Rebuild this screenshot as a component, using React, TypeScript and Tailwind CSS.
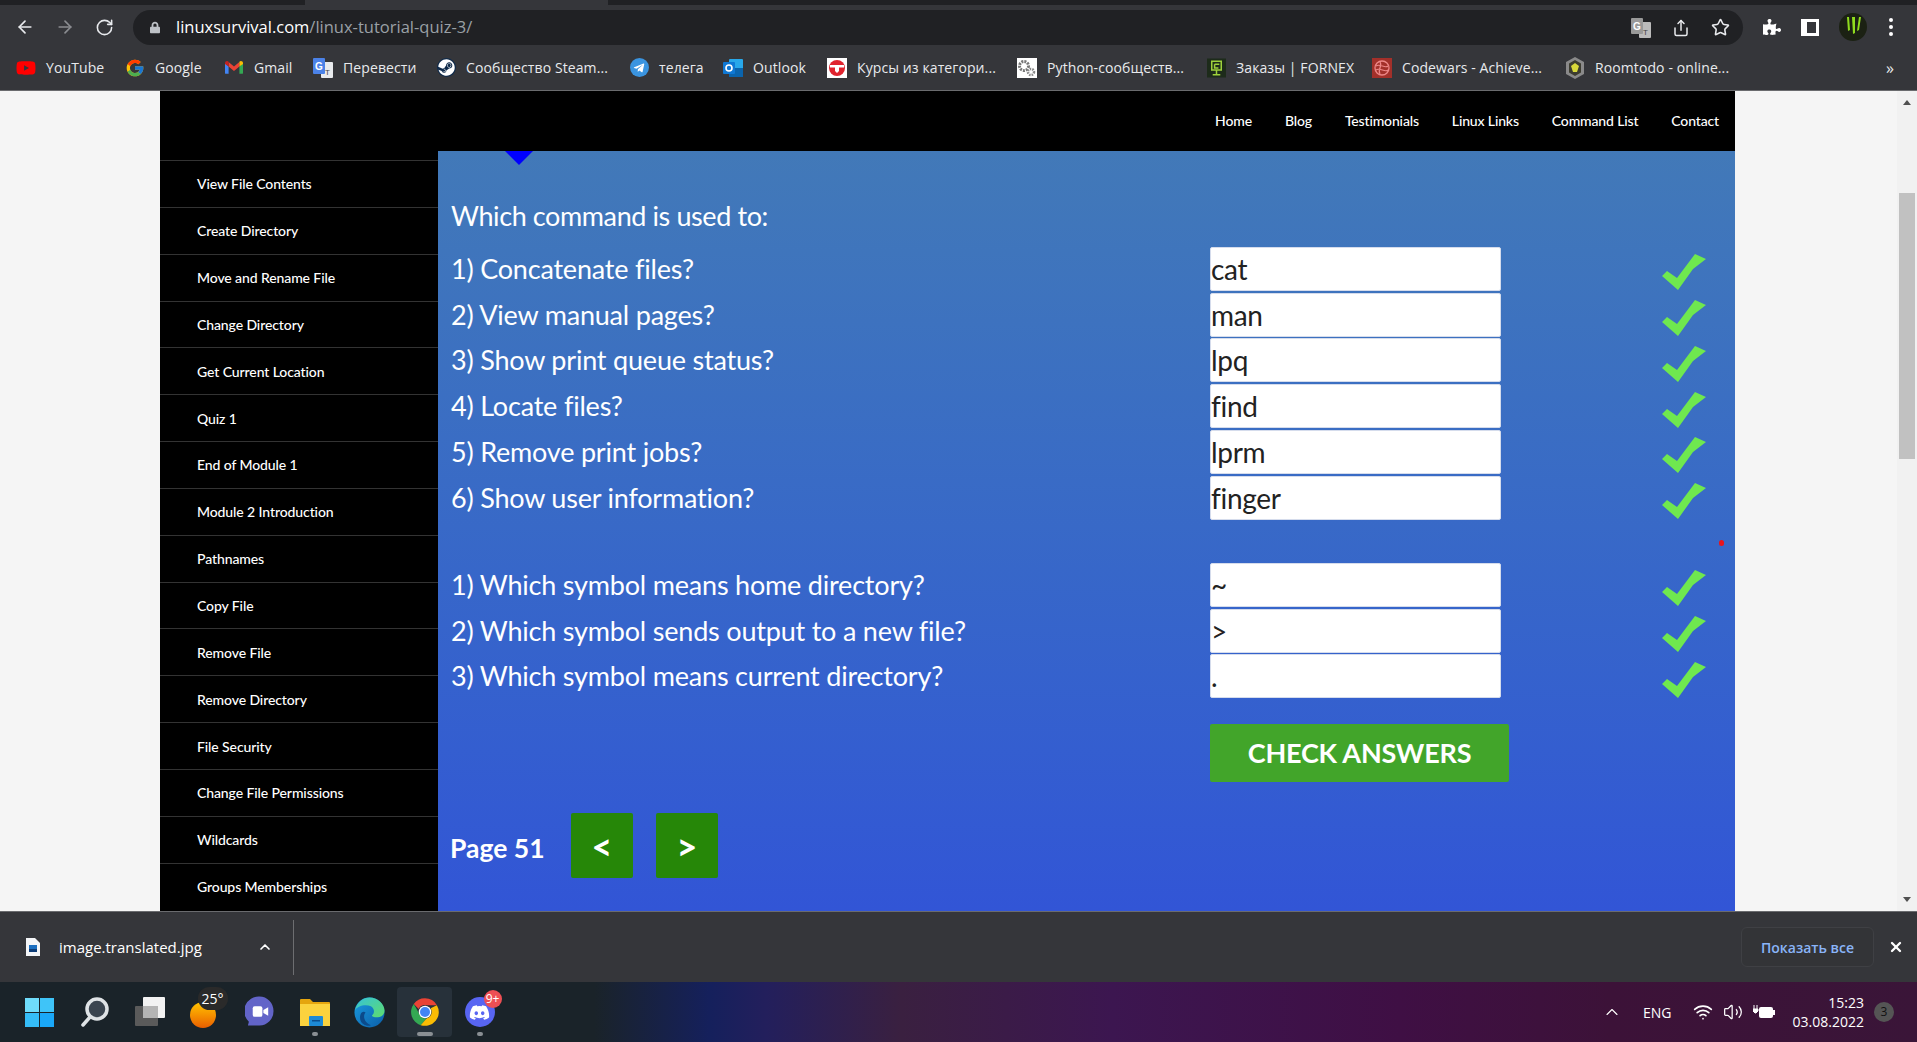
import React from "react";
import { ArrowLeft, ArrowRight, RotateCw, Share, Star, ChevronUp, X, Volume2, Wifi } from "lucide-react";
import { FaSteam, FaTelegramPlane, FaDiscord, FaPuzzlePiece, FaLock, FaYoutube } from "react-icons/fa";
import { FcGoogle } from "react-icons/fc";

const LATO = "font-['Lato',sans-serif]";
const UI = "font-['Open_Sans',sans-serif]";

const Gmail = () => (
  <svg viewBox="0 0 20 16" className="w-[18px] h-[15px]">
    <path d="M0 3v11a1 1 0 0 0 1 1h3V7z" fill="#4285f4" />
    <path d="M20 3v11a1 1 0 0 1-1 1h-3V7z" fill="#34a853" />
    <path d="M4 7v8h0V7l6 5 6-5V2l-6 5-6-5z" fill="#ea4335" />
    <path d="M0 3c0-2 2.500-3 4-1.500V7L0 4z" fill="#c5221f" />
    <path d="M20 3c0-2-2.500-3-4-1.500V7l4-3z" fill="#fbbc04" />
  </svg>
);
const Translate = ({ small }: { small?: boolean }) => (
  <svg viewBox="0 0 20 20" className="w-[20px] h-[20px]">
    <rect x="8" y="4" width="12" height="16" rx="1" fill={small ? "#bbb" : "#e8eaed"} />
    <rect x="0" y="0" width="12" height="16" rx="1" fill={small ? "#999" : "#4b82e8"} />
    <text x="6" y="12" fontSize="10" fontWeight="700" textAnchor="middle" fill="#fff" fontFamily="Liberation Sans">G</text>
    <text x="14.500" y="17" fontSize="8" textAnchor="middle" fill="#444" fontFamily="Liberation Sans">T</text>
  </svg>
);
const Outlook = () => (
  <svg viewBox="0 0 20 20" className="w-[20px] h-[20px]">
    <rect x="6" y="1" width="14" height="18" rx="1" fill="#28a8ea" />
    <rect x="6" y="10" width="14" height="9" fill="#0a64ad" />
    <rect x="0" y="4" width="12" height="12" rx="1" fill="#0f78d4" />
    <circle cx="6" cy="10" r="3" fill="none" stroke="#fff" strokeWidth="1.600" />
  </svg>
);
const Kursy = () => (
  <svg viewBox="0 0 20 20" className="w-[20px] h-[20px]">
    <rect width="20" height="20" fill="#fff" />
    <circle cx="10" cy="10" r="8" fill="#e0232e" />
    <rect x="3" y="7" width="14" height="2.500" fill="#fff" />
    <path d="M8 9h4v4l-2 2-2-2z" fill="#fff" />
  </svg>
);
const Gears = () => (
  <svg viewBox="0 0 20 20" className="w-[20px] h-[20px]">
    <rect width="20" height="20" fill="#fff" />
    <circle cx="7" cy="8" r="4.500" fill="none" stroke="#777" strokeWidth="3" strokeDasharray="2 1" />
    <circle cx="14" cy="14" r="3" fill="none" stroke="#888" strokeWidth="2.500" strokeDasharray="1.500 1" />
  </svg>
);
const Fornex = () => (
  <svg viewBox="0 0 20 20" className="w-[19px] h-[20px]">
    <rect width="20" height="20" fill="#1d2b1a" />
    <path d="M5 3h10v9H5zM8 6h5M8 6v4h4M10 12v5M6 17h8" fill="none" stroke="#9ed13c" strokeWidth="1.600" />
  </svg>
);
const Codewars = () => (
  <svg viewBox="0 0 20 20" className="w-[20px] h-[20px]">
    <rect width="20" height="20" fill="#a3302a" />
    <circle cx="10" cy="10" r="7" fill="none" stroke="#e88" strokeWidth="1.300" />
    <path d="M4 8c4-3 9 3 12 0M4 12c4-3 9 3 12 0M8 4c3 4-3 8 0 12" fill="none" stroke="#e88" strokeWidth="1.200" />
  </svg>
);
const Roomtodo = () => (
  <svg viewBox="0 0 20 22" className="w-[20px] h-[22px]">
    <path d="M10 0l9 5v12l-9 5-9-5V5z" fill="#8a8a8a" />
    <path d="M10 3l6 3.500v9L10 19l-6-3.500v-9z" fill="#3c3c30" />
    <path d="M10 6l4 3-2 6H8L6 9z" fill="#d8d83a" />
  </svg>
);
const Brand = ({ className, children }: { className: string; children: React.ReactNode }) => (
  <span className={className}>{children}</span>
);

const bookmarks: { icon: React.ReactNode; label: string; w: string }[] = [
  { icon: <FaYoutube className="w-[20px] h-[20px] text-[#ff0000]" />, label: "YouTube", w: "w-[58px]" },
  { icon: <FcGoogle className="w-[20px] h-[20px]" />, label: "Google", w: "w-[48px]" },
  { icon: <Gmail />, label: "Gmail", w: "w-[38px]" },
  { icon: <Translate />, label: "Перевести", w: "w-[72px]" },
  { icon: <Brand className="w-[19px] h-[19px] flex items-center justify-center rounded-full bg-[#0f2a4a]"><FaSteam className="w-[17px] h-[17px] text-white" /></Brand>, label: "Сообщество Steam...", w: "w-[142px]" },
  { icon: <Brand className="w-[19px] h-[19px] flex items-center justify-center rounded-full bg-[#3a94e0]"><FaTelegramPlane className="w-[12px] h-[12px] text-white" /></Brand>, label: "телега", w: "w-[43px]" },
  { icon: <Outlook />, label: "Outlook", w: "w-[53px]" },
  { icon: <Kursy />, label: "Курсы из категори...", w: "w-[139px]" },
  { icon: <Gears />, label: "Python-сообществ...", w: "w-[138px]" },
  { icon: <Fornex />, label: "Заказы | FORNEX", w: "w-[115px]" },
  { icon: <Codewars />, label: "Codewars - Achieve...", w: "w-[142px]" },
  { icon: <Roomtodo />, label: "Roomtodo - online...", w: "w-[136px]" },
];

const sidebar = [
  "View File Contents", "Create Directory", "Move and Rename File", "Change Directory", "Get Current Location",
  "Quiz 1", "End of Module 1", "Module 2 Introduction", "Pathnames", "Copy File", "Remove File", "Remove Directory",
  "File Security", "Change File Permissions", "Wildcards", "Groups Memberships",
];
const nav = ["Home", "Blog", "Testimonials", "Linux Links", "Command List", "Contact"];
const q1 = [
  ["1) Concatenate files?", "cat"], ["2) View manual pages?", "man"], ["3) Show print queue status?", "lpq"],
  ["4) Locate files?", "find"], ["5) Remove print jobs?", "lprm"], ["6) Show user information?", "finger"],
];
const q2 = [
  ["1) Which symbol means home directory?", "~"], ["2) Which symbol sends output to a new file?", ">"], ["3) Which symbol means current directory?", "."],
];

const Check = () => (
  <svg viewBox="0 0 46 38" className="w-[46px] h-[38px] mt-[7px] shrink-0">
    <polygon points="1,23 6,18 16,25 34,1 45,6 32,16 17,37" fill="#6fe84f" />
  </svg>
);

const Row = ({ q, a }: { q: string; a: string }) => (
  <div className="flex items-center h-[45.75px]">
    <div className="w-[759px] shrink-0 pb-[1px] text-[27px] tracking-[-0.2px] leading-none text-white">{q}</div>
    <div className="w-[291px] h-[44px] shrink-0 bg-white rounded-[2px] border border-[#d5dcec] flex items-center text-[28px] tracking-[-0.3px] text-[#222]">{a}</div>
    <div className="w-[160px] shrink-0" />
    <Check />
  </div>
);

const Chrome = () => (
  <svg viewBox="0 0 48 48" className="w-[30px] h-[30px]">
    <path d="M24 2a22 22 0 0 1 19 11H24a11 11 0 0 0-10 6L6 11A22 22 0 0 1 24 2z" fill="#ea4335" />
    <path d="M6 11l9.500 17a11 11 0 0 0 11 6.500L17 45A22 22 0 0 1 6 11z" fill="#34a853" />
    <path d="M43 13a22 22 0 0 1-26 32l9.500-10.500A11 11 0 0 0 33 18z" fill="#fbbc04" />
    <circle cx="24" cy="24" r="10" fill="#fff" />
    <circle cx="24" cy="24" r="8" fill="#4285f4" />
  </svg>
);
const Edge = () => (
  <svg viewBox="0 0 32 32" className="w-[31px] h-[31px]">
    <defs>
      <linearGradient id="edgeA" x1="0" y1="0" x2="1" y2="1"><stop offset="0" stopColor="#36c3d8" /><stop offset="1" stopColor="#5fdc6c" /></linearGradient>
      <linearGradient id="edgeB" x1="0" y1="0" x2="1" y2="1"><stop offset="0" stopColor="#1a9be0" /><stop offset="1" stopColor="#0b5ea8" /></linearGradient>
    </defs>
    <circle cx="16" cy="16" r="15.500" fill="url(#edgeB)" />
    <path d="M1 14C3 5 10 .5 16 .5c9 0 15.500 7 15.500 13.500 0 5-4 7-8 7-3 0-5-1-5-2 3-2 3-7-1-9.500C12 7 3 9 1 14z" fill="url(#edgeA)" />
    <path d="M12 16c-3 3-2 10 5 13 2 1-7 2-10-4-2-4 0-12 5-9z" fill="#0c4a8a" />
  </svg>
);

const Slot = ({ children, dot, active }: { children: React.ReactNode; dot?: boolean; active?: boolean }) => (
  <div className={"relative w-[55px] h-[50px] flex items-center justify-center rounded " + (active ? "bg-[#27313a]" : "")}>
    {children}
    {dot && <span className="absolute bottom-[1px] left-1/2 -translate-x-1/2 w-[6px] h-[4px] rounded bg-[#8a8f94]" />}
    {active && <span className="absolute bottom-[1px] left-1/2 -translate-x-1/2 w-[16px] h-[4px] rounded bg-[#8a8f94]" />}
  </div>
);

export default function App() {
  return (
    <div className="h-[1042px] w-[1917px] overflow-hidden flex flex-col bg-[#f5f5f5]">
      {/* Tab strip */}
      <div className="h-[5px] bg-[#202124] flex shrink-0">
        <div className="ml-[305px] w-[303px] bg-[#35363a]" />
      </div>
      {/* Toolbar */}
      <div className="h-[44px] bg-[#35363a] flex items-center shrink-0 text-[#e8eaed]">
        <div className="w-[133px] flex items-center pl-[15px] gap-[20px] shrink-0">
          <ArrowLeft className="w-[20px] h-[20px]" strokeWidth={2} />
          <ArrowRight className="w-[20px] h-[20px] text-[#8a8c90]" strokeWidth={2} />
          <RotateCw className="w-[19px] h-[19px]" strokeWidth={2} />
        </div>
        <div className="w-[1610px] h-[35px] mt-[1px] rounded-full bg-[#202124] flex items-center pl-[17px] shrink-0">
          <FaLock className="w-[10px] h-[13px] text-[#bdc1c6]" />
          <span className={UI + " ml-[16px] text-[16.5px] text-white"}>linuxsurvival.com<span className="text-[#9aa0a6]">/linux-tutorial-quiz-3/</span></span>
          <div className="ml-auto flex items-center gap-[21px] pr-[13px]">
            <Translate small />
            <Share className="w-[18px] h-[18px]" />
            <Star className="w-[19px] h-[19px]" />
          </div>
        </div>
        <div className="flex items-center pl-[20px] gap-[20px]">
          <FaPuzzlePiece className="w-[18px] h-[18px] text-white" />
          <span className="w-[18px] h-[17px] border-[3px] border-white border-l-[6px] bg-[#35363a]" />
          <svg viewBox="0 0 28 28" className="w-[28px] h-[28px]">
            <circle cx="14" cy="14" r="14" fill="#1b2113" />
            <path d="M8 4l1 14 2-1-1-13zM13 4l1 17 2-1V4zM20 4l-2 14 2-1 2-13z" fill="#8fdc1e" />
          </svg>
          <span className="flex flex-col gap-[3px] ml-[2px]">
            <i className="w-[4px] h-[4px] rounded-full bg-white" />
            <i className="w-[4px] h-[4px] rounded-full bg-white" />
            <i className="w-[4px] h-[4px] rounded-full bg-white" />
          </span>
        </div>
      </div>
      {/* Bookmarks */}
      <div className={UI + " h-[42px] pb-[4px] bg-[#35363a] border-b border-[#6a6b6e] flex items-center pl-[16px] gap-[21px] shrink-0 text-[14px] tracking-[0.1px] text-[#e8eaed] relative"}>
        {bookmarks.map((b) => (
          <div key={b.label} className="flex items-center gap-[10px] shrink-0">
            <span className="w-[20px] flex justify-center shrink-0">{b.icon}</span>
            <span className={b.w + " whitespace-nowrap"}>{b.label}</span>
          </div>
        ))}
        <span className="absolute left-[1886px] top-[7px] text-[16px]">»</span>
      </div>
      {/* Page */}
      <div className="flex-1 min-h-0 flex">
        <div className={LATO + " ml-[160px] w-[1575px] flex flex-col shrink-0"}>
          <header className="h-[60px] pb-[1px] bg-black flex items-center justify-end pr-[16px] gap-[33px] text-white text-[14px] font-medium shrink-0 tracking-[-0.15px]">
            {nav.map((n) => <span key={n}>{n}</span>)}
          </header>
          <div className="flex-1 min-h-0 flex">
            <nav className="w-[278px] bg-black pt-[9px] shrink-0 overflow-hidden">
              {sidebar.map((s) => (
                <div key={s} className="h-[46.85px] border-t border-[#333] pl-[37px] flex items-center text-white text-[14px] font-medium tracking-[-0.1px]">{s}</div>
              ))}
            </nav>
            <main className="relative flex-1 pl-[13px] pt-[42px] bg-gradient-to-b from-[#4279b8] to-[#3255d6]">
              <span className="absolute left-[67px] top-0 w-0 h-0 border-l-[14px] border-r-[14px] border-t-[14px] border-l-transparent border-r-transparent border-t-[#0000ff]" />
              <span className="absolute left-[1281px] top-[389px] w-[5px] h-[6px] rounded-full bg-[#e8141c]" />
              <h1 className="h-[53px] text-[27px] tracking-[-0.4px] leading-[46px] text-white font-normal">Which command is used to:</h1>
              {q1.map(([q, a]) => <Row key={q} q={q} a={a} />)}
              <div className="h-[41.5px]" />
              {q2.map(([q, a]) => <Row key={q} q={q} a={a} />)}
              <button className="ml-[759px] mt-[25px] w-[299px] h-[58px] rounded-[2px] bg-[#42a52a] text-white text-[27px] tracking-[-0.2px] font-bold block">CHECK ANSWERS</button>
              <div className="mt-[31px] flex items-center">
                <span className="w-[121px] -ml-[1px] pt-[6px] text-[26.5px] font-bold text-white">Page 51</span>
                <button className="w-[62px] h-[65px] rounded-[2px] bg-[#268708] text-white text-[36px] font-bold">&lt;</button>
                <button className="ml-[23px] w-[62px] h-[65px] rounded-[2px] bg-[#268708] text-white text-[36px] font-bold">&gt;</button>
              </div>
            </main>
          </div>
        </div>
        <div className="flex-1" />
        <div className="w-[20px] bg-[#f1f1f1] flex flex-col items-center shrink-0">
          <span className="mt-[9px] w-0 h-0 border-l-[4px] border-r-[4px] border-b-[5px] border-l-transparent border-r-transparent border-b-[#505050]" />
          <span className="mt-[88px] w-[16px] h-[266px] bg-[#c1c1c1]" />
          <span className="mt-auto mb-[9px] w-0 h-0 border-l-[4px] border-r-[4px] border-t-[5px] border-l-transparent border-r-transparent border-t-[#505050]" />
        </div>
      </div>
      {/* Download bar */}
      <div className={UI + " h-[71px] bg-[#35363a] border-t border-[#6a6b6e] flex items-center shrink-0 text-white"}>
        <svg viewBox="0 0 14 18" className="ml-[26px] w-[14px] h-[18px] shrink-0">
          <path d="M0 0h9l5 5v13H0z" fill="#f4f6f8" />
          <rect x="3" y="7" width="8" height="7" fill="#1c6fc0" />
          <rect x="3" y="11" width="8" height="3" fill="#0d3d78" />
        </svg>
        <span className="ml-[19px] w-[146px] text-[15px] whitespace-nowrap">image.translated.jpg</span>
        <ChevronUp className="ml-[52px] w-[16px] h-[16px]" strokeWidth={2.500} />
        <span className="ml-[20px] w-px h-[55px] bg-[#6d6e71]" />
        <button className="ml-[1447px] w-[133px] h-[40px] rounded-[6px] border border-[#3f4044] bg-[#333437] text-[#8ab4f8] text-[14px] font-semibold">Показать все</button>
        <X className="ml-[14px] w-[16px] h-[16px]" strokeWidth={3.500} />
      </div>
      {/* Taskbar */}
      <div className={UI + " h-[60px] shrink-0 flex items-center bg-[linear-gradient(90deg,#1a2329_0%,#1a2329_31%,#15205c_37%,#231f5c_40%,#3a2040_47%,#3c1650_58%,#3f0f44_73%,#3c1238_84%,#3a1538_100%)] text-white"}>
        <div className="ml-[12px] flex items-center">
          <Slot>
            <div className="grid grid-cols-2 gap-[1px] w-[29px] h-[29px]">
              <i className="bg-[#6fdcfb]" /><i className="bg-[#3fc4f8]" /><i className="bg-[#35bdf8]" /><i className="bg-[#1aa8f8]" />
            </div>
          </Slot>
          <Slot>
            <svg viewBox="0 0 28 30" className="w-[28px] h-[30px]">
              <circle cx="16" cy="12" r="10" fill="#3b4550" stroke="#dfe3e6" strokeWidth="3.500" />
              <line x1="9" y1="20" x2="2" y2="28" stroke="#dfe3e6" strokeWidth="3.500" strokeLinecap="round" />
            </svg>
          </Slot>
          <Slot>
            <svg viewBox="0 0 30 30" className="w-[30px] h-[30px]">
              <rect x="0" y="9" width="23" height="20" rx="1" fill="#5a5a5a" />
              <rect x="8" y="0" width="22" height="21" rx="1" fill="#f2f2f2" />
              <rect x="8" y="9" width="15" height="12" fill="#b4b4b4" />
            </svg>
          </Slot>
          <Slot>
            <div className="relative w-[26px] h-[26px] rounded-full bg-gradient-to-b from-[#ffc400] to-[#e85d00] mt-[6px] -ml-[4px]">
              <span className="absolute -top-[15px] left-[8px] px-[4px] h-[23px] leading-[23px] rounded-full bg-[#2a2a2a] text-[14px]">25°</span>
            </div>
          </Slot>
          <Slot>
            <svg viewBox="0 0 30 32" className="w-[29px] h-[32px]">
              <path d="M15 0a14.500 15 0 0 1 0 30H3l1-4A15 15 0 0 1 15 0z" fill="#6264c8" />
              <rect x="8" y="10" width="10" height="11" rx="2" fill="#fff" />
              <path d="M19 14l5-3v9l-5-3z" fill="#fff" />
            </svg>
          </Slot>
          <Slot dot>
            <svg viewBox="0 0 30 28" className="w-[30px] h-[28px]">
              <path d="M0 2a1 1 0 0 1 1-1h9l3 3h16a1 1 0 0 1 1 1v3H0z" fill="#e5a50e" />
              <rect x="0" y="6" width="30" height="22" fill="#fbd23e" />
              <rect x="9" y="18" width="14" height="10" rx="1" fill="#1d8ad6" />
              <rect x="12" y="22" width="8" height="1.500" fill="#0b4f8f" />
            </svg>
          </Slot>
          <Slot><Edge /></Slot>
          <Slot active><Chrome /></Slot>
          <Slot dot>
            <div className="relative w-[30px] h-[30px] rounded-full bg-[#5865f2] flex items-center justify-center">
              <FaDiscord className="w-[21px] h-[21px] text-white" />
              <span className="absolute -top-[7px] -right-[7px] w-[18px] h-[18px] rounded-full bg-[#ed4f54] text-[12px] leading-[18px] text-center">9+</span>
            </div>
          </Slot>
        </div>
        <div className="ml-auto flex items-center">
          <ChevronUp className="w-[20px] h-[20px] mr-[21px]" strokeWidth={1.300} />
          <span className="text-[14px] w-[28px] mr-[22px] whitespace-nowrap">ENG</span>
          <Wifi className="w-[20px] h-[20px] mr-[10px]" strokeWidth={2} />
          <Volume2 className="w-[20px] h-[20px] mr-[10px]" strokeWidth={1.500} />
          <svg viewBox="0 0 22 16" className="w-[22px] h-[16px] mr-[17px]">
            <rect x="6" y="3" width="14" height="11" rx="2" fill="#fff" />
            <rect x="20" y="6" width="2" height="5" fill="#fff" />
            <path d="M1 1v4M4 1v4M0 5h5v2l-2 2H2L0 7z" stroke="#fff" strokeWidth="1" fill="#fff" />
          </svg>
          <div className="text-right text-[14px] leading-[19px] w-[72px]">
            <div>15:23</div>
            <div>03.08.2022</div>
          </div>
          <span className="ml-[10px] mr-[23px] w-[20px] h-[20px] rounded-full bg-[#555] text-[12px] leading-[20px] text-center text-[#111]">3</span>
        </div>
      </div>
    </div>
  );
}
